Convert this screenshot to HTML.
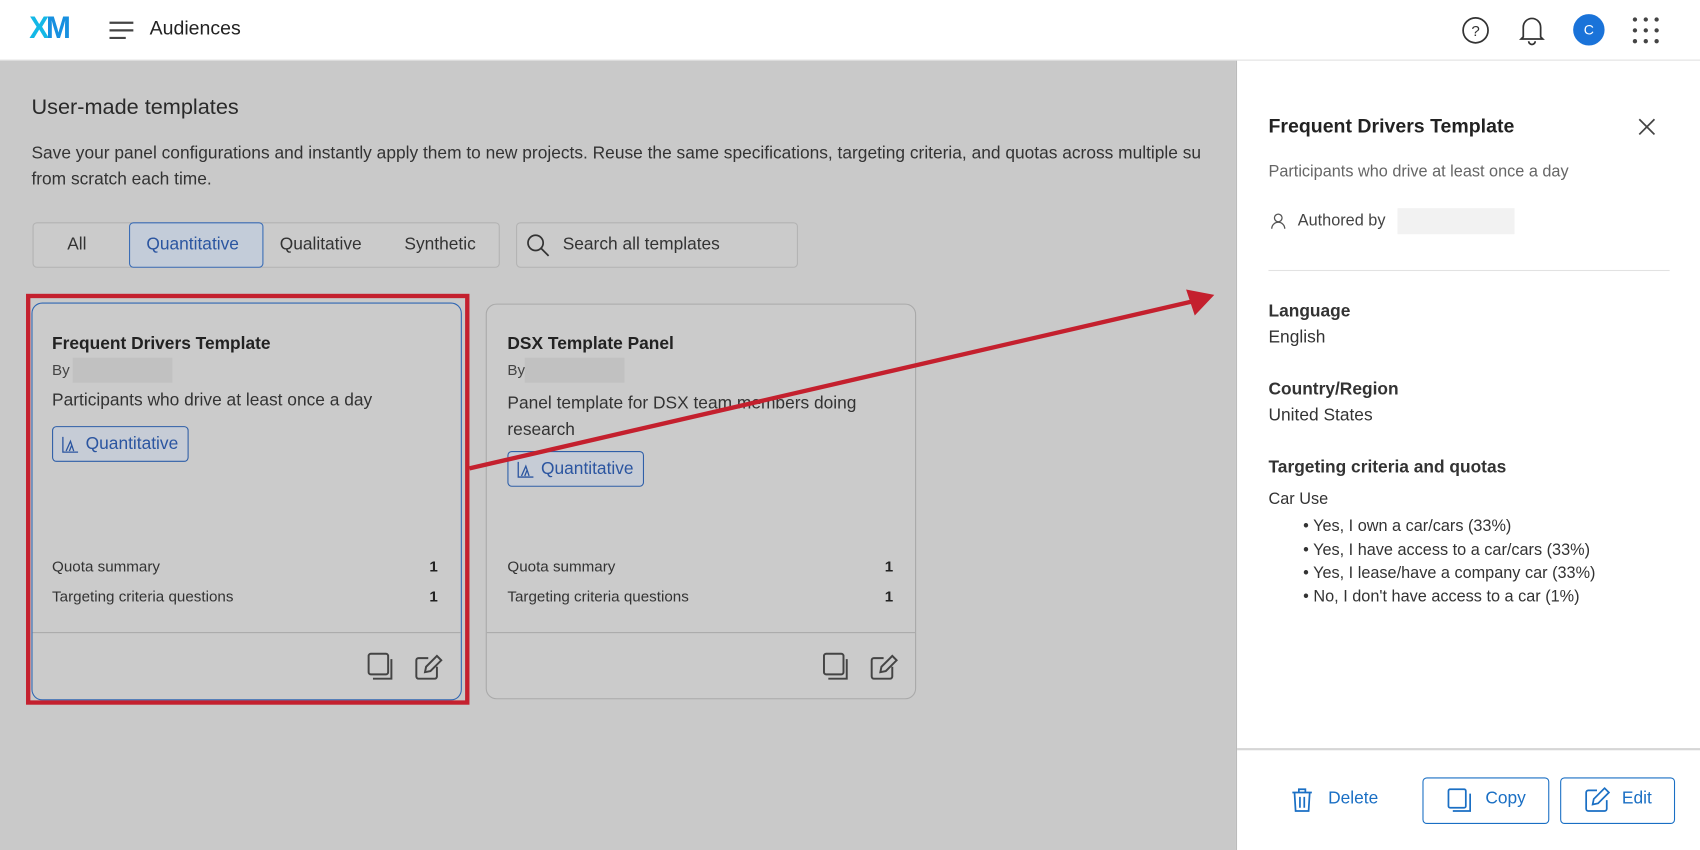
<!DOCTYPE html>
<html><head><meta charset="utf-8"><style>
*{box-sizing:border-box;margin:0;padding:0}
html,body{width:1700px;height:850px;overflow:hidden;background:#fff}
#w{width:1568px;height:784px;transform:scale(1.08418,1.08418);transform-origin:0 0;position:relative;font-family:"Liberation Sans",sans-serif;color:#222}
.a{position:absolute;white-space:nowrap}
.main{position:absolute;left:0;top:56px;width:1140px;height:728px;background:#c9c9c9}
.hdr{position:absolute;left:0;top:0;width:1568px;height:56px;background:#fff;border-bottom:1px solid #ddd}
.panel{position:absolute;left:1140px;top:56px;width:428px;height:728px;background:#fff;border-left:1px solid #bbb}
.card{position:absolute;border:1px solid #a9a9a9;border-radius:10px;background:#cbcbcb}
.tag{position:absolute;border:1.5px solid #2f5fa8;border-radius:4px;color:#2b55a0;font-size:16px;padding:0 0 0 30px;height:33px;line-height:31px;width:126px;background:#c6ccd6}
.btn{position:absolute;border:1.5px solid #1a6fc4;border-radius:4px;color:#1a6fc4;font-size:16px;height:43px;line-height:40px}
</style></head><body><div id="w">
<div class="hdr">
<div class="a" style="left:26px;top:10px;font-size:29px;font-weight:bold;letter-spacing:-3px;color:#1790e0;transform:scaleX(0.95)"><span style="color:#14b8e6">X</span>M</div>
<svg class="a" style="left:100px;top:18px" width="24" height="20"><path d="M1 3h22M1 10h22M1 17h15" stroke="#444" stroke-width="2"/></svg>
<div class="a" style="left:138px;top:16px;font-size:18px;color:#222">Audiences</div>
<svg class="a" style="left:1347px;top:14px" width="28" height="28"><circle cx="14" cy="14" r="11.5" fill="none" stroke="#333" stroke-width="1.6"/><text x="14" y="19" font-size="14" text-anchor="middle" fill="#333" font-family="Liberation Sans">?</text></svg>
<svg class="a" style="left:1400px;top:13px" width="26" height="30"><path d="M5 21V12a8 8 0 0 1 16 0v9l2 2H3z M10 25a3 3 0 0 0 6 0" fill="none" stroke="#333" stroke-width="1.6"/></svg>
<div class="a" style="left:1451px;top:13px;width:29px;height:29px;border-radius:50%;background:#1a73d9;color:#fff;font-size:13px;text-align:center;line-height:29px">C</div>
<svg class="a" style="left:1505px;top:15px" width="26" height="26"><g fill="#444"><circle cx="3" cy="3" r="2"/><circle cx="13" cy="3" r="2"/><circle cx="23" cy="3" r="2"/><circle cx="3" cy="13" r="2"/><circle cx="13" cy="13" r="2"/><circle cx="23" cy="13" r="2"/><circle cx="3" cy="23" r="2"/><circle cx="13" cy="23" r="2"/><circle cx="23" cy="23" r="2"/></g></svg>
</div>
<div class="main">
<div class="a" style="left:29px;top:32px;font-size:20px;color:#2a2a2a">User-made templates</div>
<div class="a" style="left:29px;top:74px;font-size:16px;color:#333;line-height:24px">Save your panel configurations and instantly apply them to new projects. Reuse the same specifications, targeting criteria, and quotas across multiple su<br>from scratch each time.</div>
<div class="a" style="left:30px;top:149px;width:431px;height:42px;border:1px solid #b3b3b3;border-radius:4px;background:#cbcbcb"></div>
<div class="a" style="left:119px;top:149px;width:124px;height:42px;border:1.5px solid #3a6cb5;border-radius:4px;background:#c3ccd9"></div>
<div class="a" style="left:62px;top:161px;font-size:16px;color:#333">All</div>
<div class="a" style="left:135px;top:161px;font-size:16px;color:#2b55a0">Quantitative</div>
<div class="a" style="left:258px;top:161px;font-size:16px;color:#333">Qualitative</div>
<div class="a" style="left:373px;top:161px;font-size:16px;color:#333">Synthetic</div>
<div class="a" style="left:476px;top:149px;width:260px;height:42px;border:1px solid #b3b3b3;border-radius:4px;background:#cbcbcb"></div>
<svg class="a" style="left:485px;top:159px" width="24" height="24"><circle cx="9" cy="9" r="7" fill="none" stroke="#333" stroke-width="1.6"/><path d="M14 14l7 7" stroke="#333" stroke-width="1.6"/></svg>
<div class="a" style="left:519px;top:161px;font-size:16px;color:#333">Search all templates</div>

<div class="card" style="left:29px;top:223px;width:397px;height:367px;border:1.5px solid #2f66b3"></div>
<div class="card" style="left:448px;top:224px;width:397px;height:365px"></div>
<div class="a" style="left:24px;top:215px;width:409px;height:379px;border:4px solid #c4202e"></div>

<div class="a" style="left:48px;top:253px;font-size:16px;font-weight:bold;color:#222">Frequent Drivers Template</div>
<div class="a" style="left:48px;top:277px;font-size:14px;color:#444">By</div>
<div class="a" style="left:67px;top:274px;width:92px;height:23px;background:#c1c1c1"></div>
<div class="a" style="left:48px;top:305px;font-size:16px;color:#333">Participants who drive at least once a day</div>
<div class="tag" style="left:48px;top:337px">Quantitative</div>
<svg class="a" style="left:56px;top:345px" width="18" height="18"><path d="M2 2v14h14M5 15l4-9 3 9M8 15l2-5" fill="none" stroke="#2b55a0" stroke-width="1.2"/></svg>
<div class="a" style="left:48px;top:458px;font-size:14px;color:#333">Quota summary</div>
<div class="a" style="left:396px;top:458px;font-size:14px;font-weight:bold">1</div>
<div class="a" style="left:48px;top:486px;font-size:14px;color:#333">Targeting criteria questions</div>
<div class="a" style="left:396px;top:486px;font-size:14px;font-weight:bold">1</div>
<div class="a" style="left:30px;top:527px;width:395px;height:1px;background:#aaa"></div>

<div class="a" style="left:468px;top:253px;font-size:16px;font-weight:bold;color:#222">DSX Template Panel</div>
<div class="a" style="left:468px;top:277px;font-size:14px;color:#444">By</div>
<div class="a" style="left:484px;top:274px;width:92px;height:23px;background:#c1c1c1"></div>
<div class="a" style="left:468px;top:305px;font-size:16px;color:#333;line-height:24px">Panel template for DSX team members doing<br>research</div>
<div class="tag" style="left:468px;top:360px">Quantitative</div>
<svg class="a" style="left:476px;top:368px" width="18" height="18"><path d="M2 2v14h14M5 15l4-9 3 9M8 15l2-5" fill="none" stroke="#2b55a0" stroke-width="1.2"/></svg>
<div class="a" style="left:468px;top:458px;font-size:14px;color:#333">Quota summary</div>
<div class="a" style="left:816px;top:458px;font-size:14px;font-weight:bold">1</div>
<div class="a" style="left:468px;top:486px;font-size:14px;color:#333">Targeting criteria questions</div>
<div class="a" style="left:816px;top:486px;font-size:14px;font-weight:bold">1</div>
<div class="a" style="left:449px;top:527px;width:395px;height:1px;background:#aaa"></div>

<svg class="a" style="left:0;top:0" width="1140" height="728">
<g fill="none" stroke="#444" stroke-width="1.8">
<rect x="340" y="547" width="18" height="19" rx="2"/><path d="M344 570h17v-18"/>
<path d="M395 551h-9a2 2 0 0 0-2 2v15a2 2 0 0 0 2 2h15a2 2 0 0 0 2-2v-9M392 564l1-5 10-10 4 4-10 10z"/>
<rect x="760" y="547" width="18" height="19" rx="2"/><path d="M764 570h17v-18"/>
<path d="M815 551h-9a2 2 0 0 0-2 2v15a2 2 0 0 0 2 2h15a2 2 0 0 0 2-2v-9M812 564l1-5 10-10 4 4-10 10z"/>
</g>
<path d="M433 376L1100 222" stroke="#c4202e" stroke-width="4"/>
<path d="M1120 216L1094 211L1102 235z" fill="#c4202e"/>
</svg>
</div>
<div class="panel">
<div class="a" style="left:29px;top:50px;font-size:18px;font-weight:bold;color:#222">Frequent Drivers Template</div>
<svg class="a" style="left:369px;top:52px" width="18" height="18"><path d="M2 2l14 14M16 2L2 16" stroke="#444" stroke-width="1.6"/></svg>
<div class="a" style="left:29px;top:94px;font-size:15px;color:#666">Participants who drive at least once a day</div>
<svg class="a" style="left:30px;top:140px" width="16" height="16"><circle cx="8" cy="5" r="3.5" fill="none" stroke="#555" stroke-width="1.2"/><path d="M2 15a6 6 0 0 1 12 0" fill="none" stroke="#555" stroke-width="1.2"/></svg>
<div class="a" style="left:56px;top:139px;font-size:15px;color:#444">Authored by</div>
<div class="a" style="left:148px;top:136px;width:108px;height:24px;background:#f2f2f2"></div>
<div class="a" style="left:29px;top:193px;width:370px;height:1px;background:#e2e2e2"></div>
<div class="a" style="left:29px;top:223px;font-size:16px;font-weight:bold;color:#333">Language</div>
<div class="a" style="left:29px;top:247px;font-size:16px;color:#333">English</div>
<div class="a" style="left:29px;top:295px;font-size:16px;font-weight:bold;color:#333">Country/Region</div>
<div class="a" style="left:29px;top:319px;font-size:16px;color:#333">United States</div>
<div class="a" style="left:29px;top:367px;font-size:16px;font-weight:bold;color:#333">Targeting criteria and quotas</div>
<div class="a" style="left:29px;top:396px;font-size:15px;color:#333">Car Use</div>
<div class="a" style="left:61px;top:419px;font-size:15px;color:#333;line-height:21.7px">• Yes, I own a car/cars (33%)<br>• Yes, I have access to a car/cars (33%)<br>• Yes, I lease/have a company car (33%)<br>• No, I don't have access to a car (1%)</div>
<div class="a" style="left:0;top:634px;width:428px;height:2px;background:#d6d6d6"></div>
<svg class="a" style="left:49px;top:670px" width="22" height="24"><path d="M2 5h18M8 5V2h6v3M4 5l1 17h12l1-17M9 9v10M13 9v10" fill="none" stroke="#1a6fc4" stroke-width="1.6"/></svg>
<div class="a" style="left:84px;top:672px;font-size:16px;color:#1a6fc4">Delete</div>
<div class="btn" style="left:171px;top:661px;width:117px;padding-left:76px"></div>
<svg class="a" style="left:193px;top:670px" width="24" height="24"><rect x="2" y="2" width="16" height="17" rx="1.5" fill="none" stroke="#1a6fc4" stroke-width="1.6"/><path d="M6 22h16V6" fill="none" stroke="#1a6fc4" stroke-width="1.6"/></svg>
<div class="a" style="left:229px;top:672px;font-size:16px;color:#1a6fc4">Copy</div>
<div class="btn" style="left:298px;top:661px;width:106px"></div>
<svg class="a" style="left:320px;top:670px" width="24" height="24"><path d="M12 3H4a2 2 0 0 0-2 2v15a2 2 0 0 0 2 2h15a2 2 0 0 0 2-2v-8M8 16l1-5 10-10 4 4-10 10z" fill="none" stroke="#1a6fc4" stroke-width="1.6"/></svg>
<div class="a" style="left:355px;top:672px;font-size:16px;color:#1a6fc4">Edit</div>
</div>
</div></body></html>
